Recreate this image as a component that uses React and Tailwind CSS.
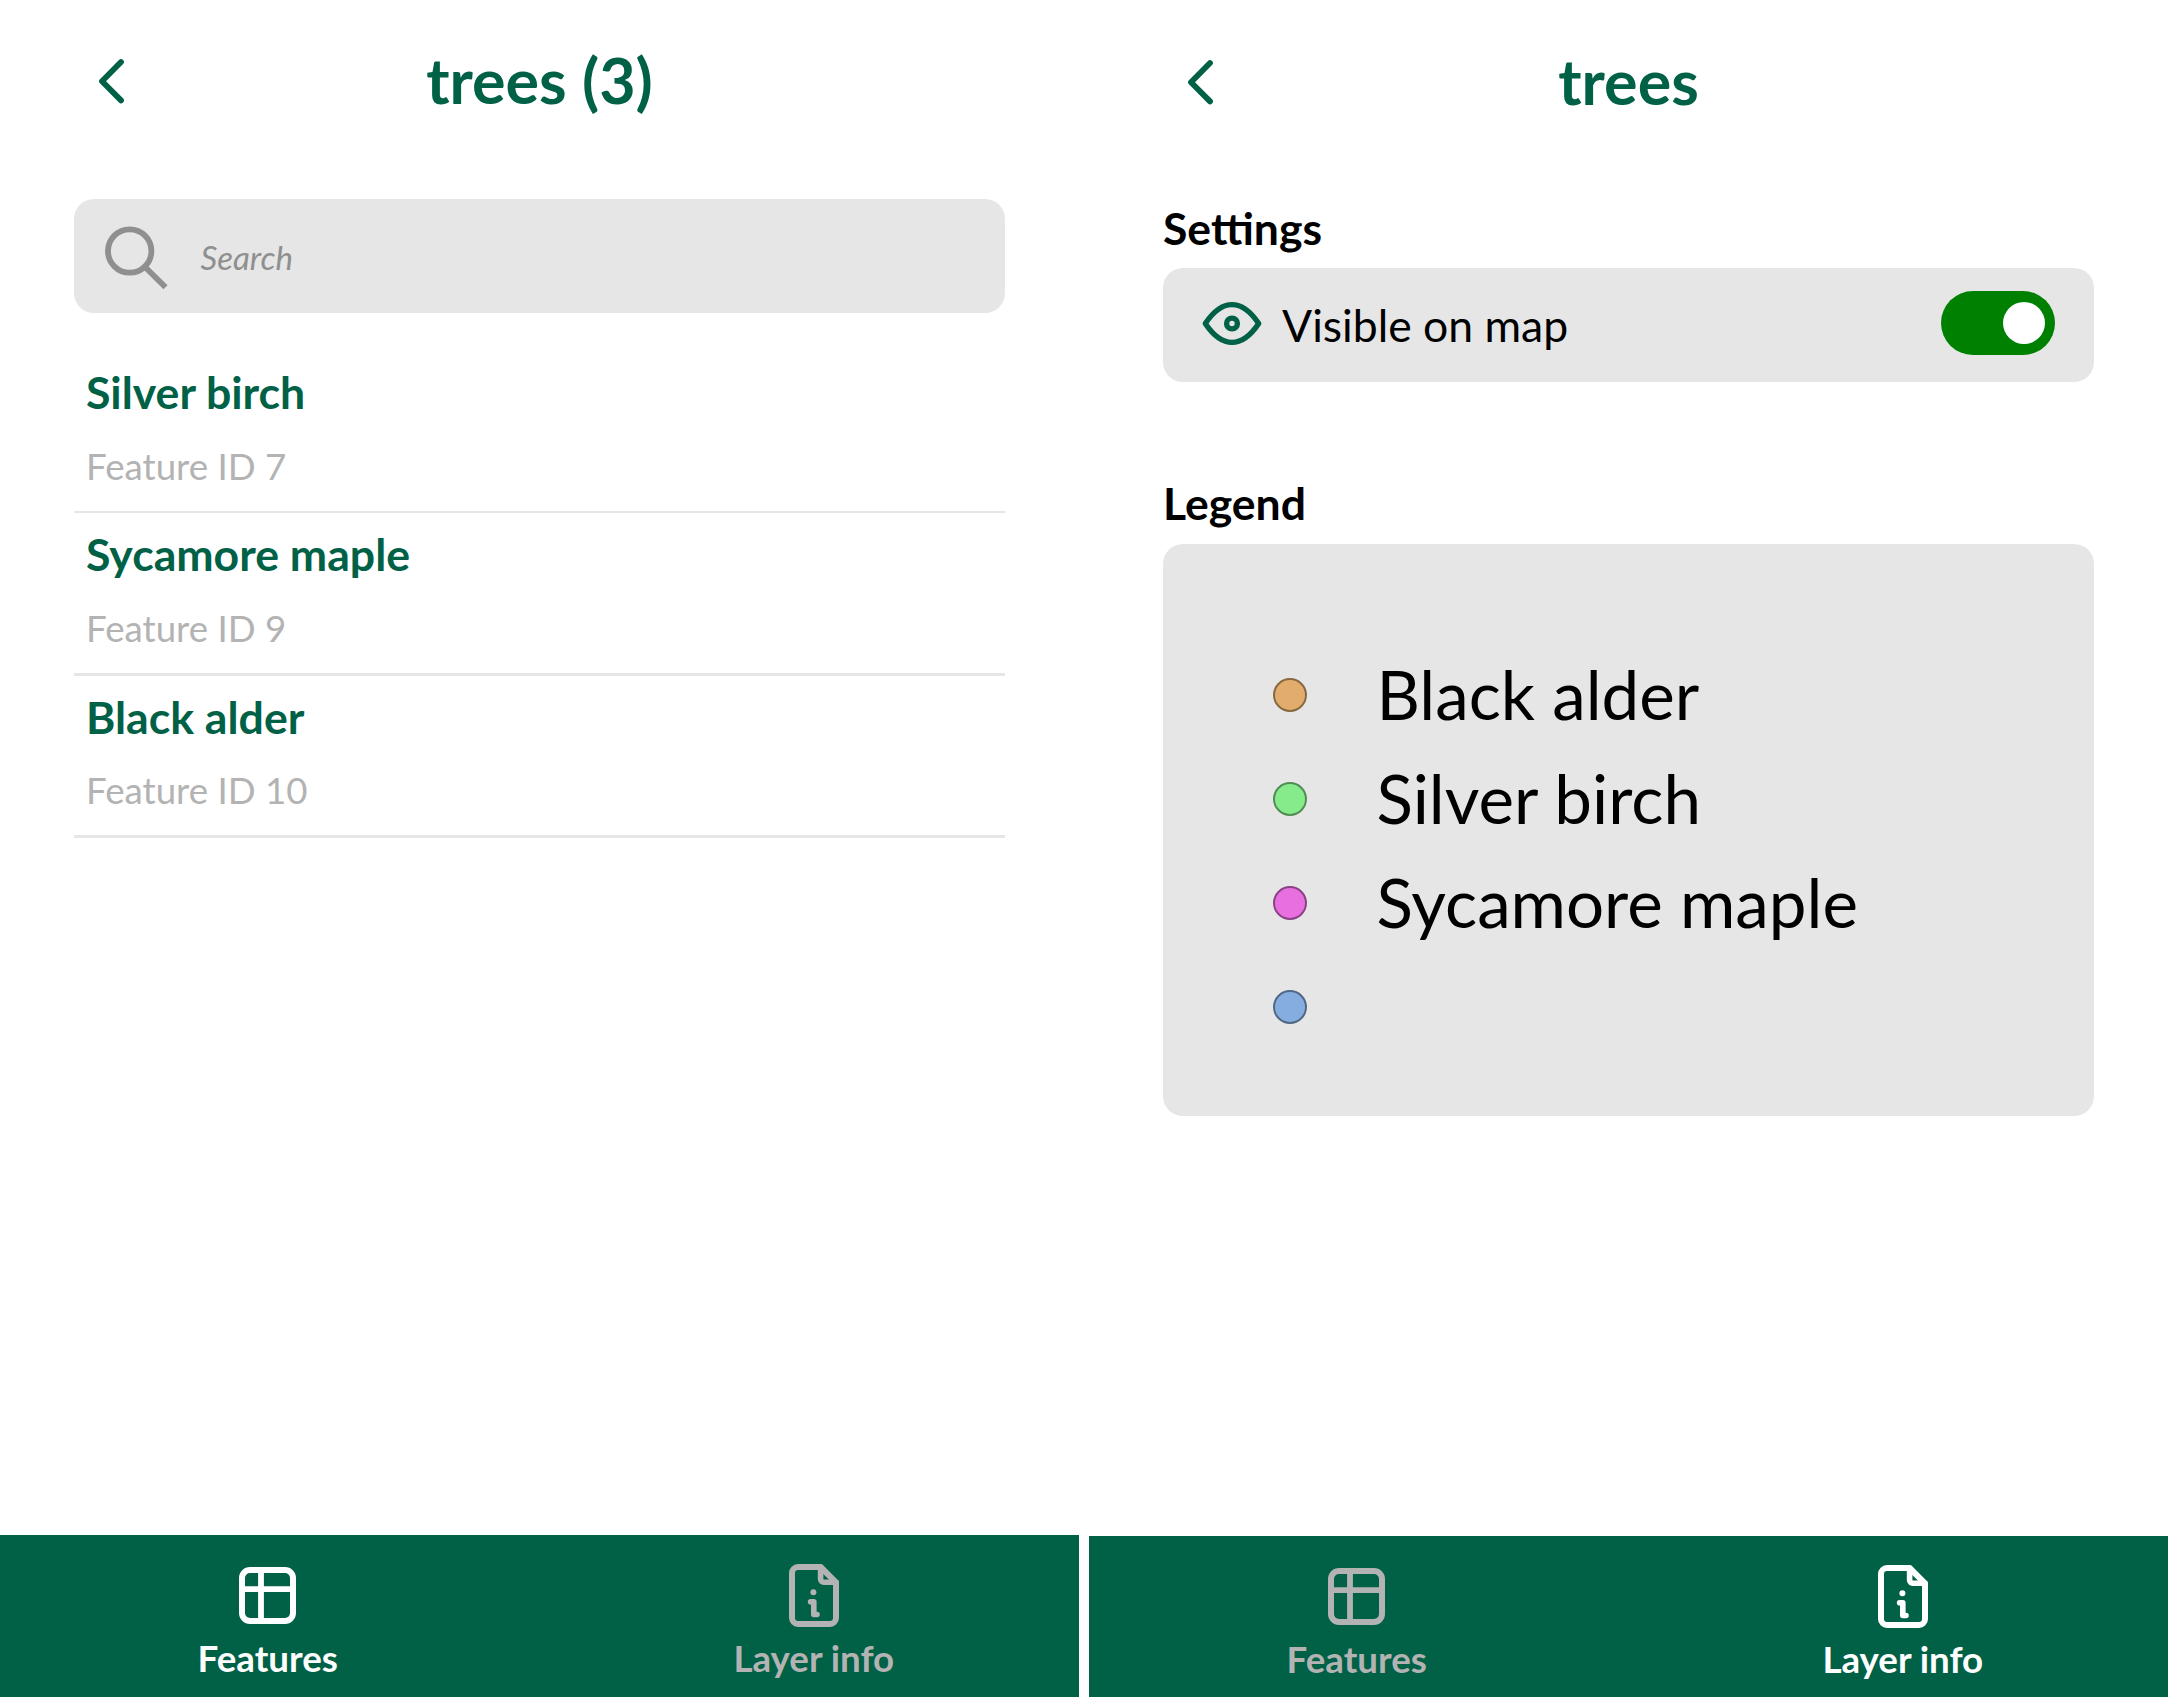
const features = [
  { name: 'Silver birch', id: 7, row: 'h-[162px] border-b-2' },
  { name: 'Sycamore maple', id: 9, row: 'h-[162.5px] border-b-[3px]' },
  { name: 'Black alder', id: 10, row: 'h-[162.5px] border-b-[3px]' },
];

const legend = [
  { label: 'Black alder', color: 'bg-[#e2ad6c]' },
  { label: 'Silver birch', color: 'bg-[#86eb8b]' },
  { label: 'Sycamore maple', color: 'bg-[#e76fe0]' },
  { label: '', color: 'bg-[#85ade0]' },
];

function ChevronLeft() {
  return (
    <svg className="h-[50px] w-[30px]" viewBox="0 0 30 50" fill="none" stroke="currentColor" strokeWidth="5.8" strokeLinecap="round" strokeLinejoin="round">
      <path d="M24 8 5 27.2 24 46.4" />
    </svg>
  );
}

function SearchIcon() {
  return (
    <svg className="h-16 w-16 overflow-visible text-[#8f8f8f]" viewBox="0 0 64 64" fill="none" stroke="currentColor" strokeWidth="5.8">
      <circle cx="27.7" cy="27" r="21.7" />
      <path d="M43 43 63.5 63.2" />
    </svg>
  );
}

function EyeIcon() {
  return (
    <svg className="h-[46px] w-[60px] text-[#006146]" viewBox="-30 -23.5 60 46" fill="none" stroke="currentColor" strokeWidth="5.4" strokeLinejoin="round">
      <path d="M-26.7 0C-20 -10 -11 -18.9 0 -18.9S20 -10 26.7 0C20 10 11 18.9 0 18.9S-20 10 -26.7 0Z" />
      <circle r="5.4" />
    </svg>
  );
}

function TableIcon() {
  return (
    <svg className="h-[57px] w-[57px]" viewBox="0 0 57 57" fill="none" stroke="currentColor" strokeWidth="6">
      <rect x="3" y="3" width="51" height="51" rx="8" />
      <path d="M22 3v51M3 22.2h51" strokeWidth="5.8" />
    </svg>
  );
}

function FileInfoIcon() {
  return (
    <svg className="h-[63px] w-[50px]" viewBox="0 0 50 63" fill="none" stroke="currentColor" strokeWidth="6" strokeLinecap="round" strokeLinejoin="round">
      <path d="M31.6 3H9a6 6 0 0 0-6 6v45a6 6 0 0 0 6 6h32a6 6 0 0 0 6-6V18.3Z" />
      <path d="M31.6 3v12.1a3.2 3.2 0 0 0 3.2 3.2H47" strokeWidth="5.6" />
      <path d="M21.6 37.7h3.2v12.8h3.2" strokeWidth="5.6" />
      <circle cx="24.4" cy="28.3" r="3" fill="currentColor" stroke="none" />
    </svg>
  );
}

function Header({ title, height }) {
  return (
    <header className={`grid shrink-0 grid-cols-[1fr_auto_1fr] items-center text-[#006146] ${height}`}>
      <div className="pl-[97px]">
        <ChevronLeft />
      </div>
      <h1 className="pt-[2px] text-[62.8px] leading-[76px] font-bold">{title}</h1>
      <div />
    </header>
  );
}

function NavItem({ icon, label, active }) {
  return (
    <div className={`flex flex-col items-center pt-7 ${active ? 'text-white' : 'text-[#b3b3b3]'}`}>
      <div className="flex h-16 items-center">{icon}</div>
      <div className="mt-[8.5px] text-[36.7px] leading-[44px] font-bold">{label}</div>
    </div>
  );
}

function BottomNav({ active, height }) {
  return (
    <nav className={`mt-auto grid shrink-0 grid-cols-[535.5px_530.5px] gap-x-[13px] bg-[#006146] ${height}`}>
      <NavItem icon={<TableIcon />} label="Features" active={active === 'features'} />
      <NavItem icon={<FileInfoIcon />} label="Layer info" active={active === 'info'} />
    </nav>
  );
}

function FeaturesScreen() {
  return (
    <section className="flex h-full w-[1079px] flex-col">
      <Header title="trees (3)" height="h-[158px]" />
      <div className="mx-[74px] mt-[41px] flex h-[114px] items-center rounded-[20px] bg-[#e6e6e6] pl-[27.5px]">
        <SearchIcon />
        <span className="ml-[35px] pt-[2px] text-[33px] leading-10 text-[#8f8f8f] italic">Search</span>
      </div>
      <ul className="mx-[74px] mt-[38px]">
        {features.map((f) => (
          <li key={f.id} className={`border-[#e6e6e6] pt-[14px] pl-3 ${f.row}`}>
            <div className="text-[44.6px] leading-[53px] font-bold text-[#006146]">{f.name}</div>
            <div className="mt-[25.5px] text-[36.7px] leading-[45px] text-[#b3b3b3]">Feature ID {f.id}</div>
          </li>
        ))}
      </ul>
      <BottomNav active="features" height="h-[162px]" />
    </section>
  );
}

function LayerInfoScreen() {
  return (
    <section className="flex h-full w-[1079px] flex-col">
      <Header title="trees" height="h-[160px]" />
      <div className="mx-[74px] mt-[41px] text-black">
        <h2 className="text-[44.5px] leading-[54px] font-bold">Settings</h2>
        <div className="mt-[13px] flex h-[114px] items-center rounded-[20px] bg-[#e6e6e6] pr-[39px] pb-1 pl-[39px]">
          <EyeIcon />
          <span className="ml-5 pt-[3px] text-[44.5px] leading-[54px]">Visible on map</span>
          <div className="ml-auto flex h-16 w-[114px] items-center justify-end rounded-full bg-[#008000] pr-[10px]">
            <div className="h-[42px] w-[42px] rounded-full bg-white" />
          </div>
        </div>
        <h2 className="mt-[94px] text-[44.5px] leading-[54px] font-bold">Legend</h2>
        <div className="mt-[14px] h-[572px] rounded-[20px] bg-[#e6e6e6] pt-[98.5px] pl-[110px]">
          {legend.map((item) => (
            <div key={item.color} className="flex h-[104.2px] items-center gap-[69.5px]">
              <div className={`h-[34px] w-[34px] rounded-full border-2 border-black/40 ${item.color}`} />
              <span className="pb-[1px] text-[67.3px] leading-[80px]">{item.label}</span>
            </div>
          ))}
        </div>
      </div>
      <BottomNav active="info" height="h-[161px]" />
    </section>
  );
}

export default function App() {
  return (
    <main className="flex h-[1697px] w-[2168px] justify-between overflow-hidden bg-white font-['Lato',sans-serif]">
      <FeaturesScreen />
      <LayerInfoScreen />
    </main>
  );
}
